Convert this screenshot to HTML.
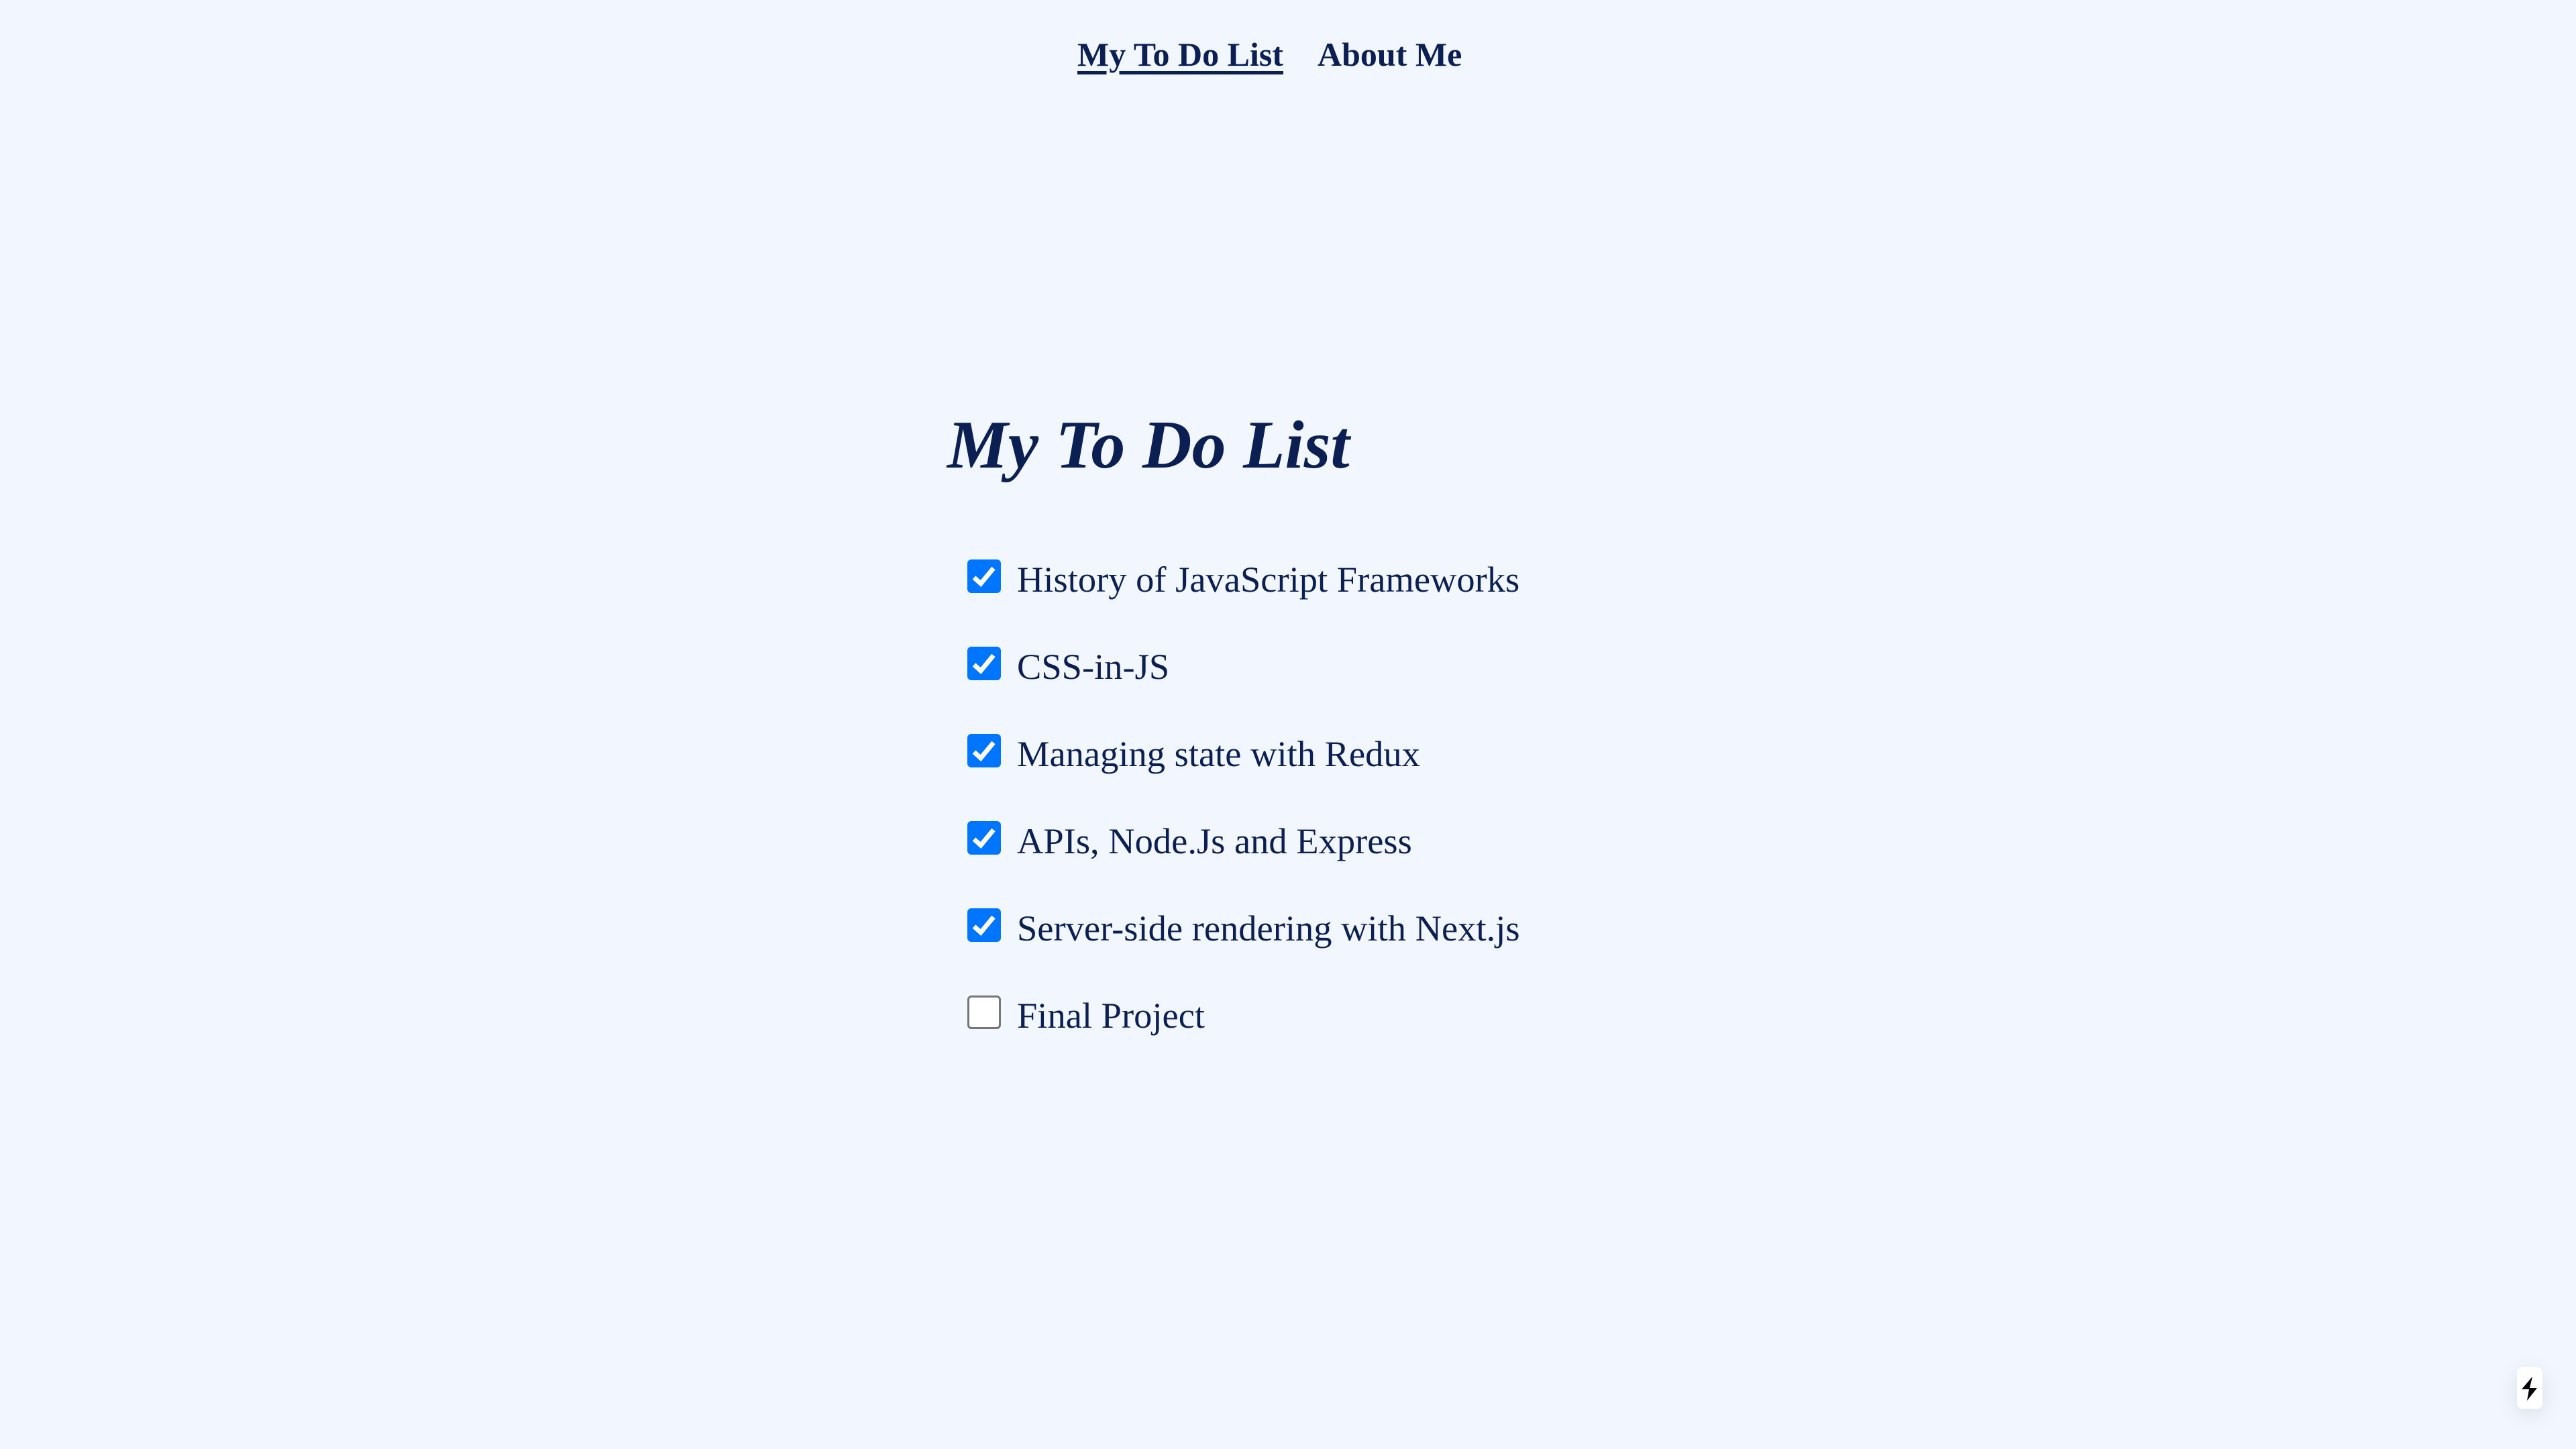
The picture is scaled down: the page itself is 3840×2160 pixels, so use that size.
<!DOCTYPE html>
<html><head><meta charset="utf-8"><style>
html,body{margin:0;padding:0}
body{width:3840px;height:2160px;background:#f2f6ff;color:#0b1f52;font-family:"Liberation Serif",serif;position:relative;overflow:hidden}
.nav{position:absolute;top:46px;font-weight:bold;font-size:50px;line-height:70px;white-space:nowrap}
.n1{left:1606px;text-decoration:underline;text-decoration-thickness:5px;text-underline-offset:8px}
.n2{left:1964px}
h1{position:absolute;left:1412px;top:594px;margin:0;font-size:102px;font-style:italic;font-weight:bold;line-height:140px;white-space:nowrap}
.row{position:absolute;left:1442px;height:50px}
.cb{position:absolute;left:0;top:0;width:50px;height:50px;border-radius:6px;background:#0075ff;box-sizing:border-box}
.cb.off{background:#fff;border:3px solid #767676}
.cb svg{position:absolute;left:6px;top:8px}
.t{position:absolute;left:74px;top:-5px;font-size:54.5px;line-height:70px;white-space:nowrap}
.badge{position:absolute;left:3752px;top:2038px;width:38px;height:62px;background:#fff;border-radius:8px;box-shadow:0 8px 30px rgba(0,0,0,.1)}
</style></head><body>
<div class="nav n1">My To Do List</div>
<div class="nav n2">About Me</div>
<h1>My To Do List</h1>
<div class="row" style="top:834px"><div class="cb"><svg width="38" height="34" viewBox="0 0 38 34"><path d="M4 19 L14 28 L33 5" stroke="#fff" stroke-width="7" fill="none"/></svg></div><div class="t">History of JavaScript Frameworks</div></div>
<div class="row" style="top:964px"><div class="cb"><svg width="38" height="34" viewBox="0 0 38 34"><path d="M4 19 L14 28 L33 5" stroke="#fff" stroke-width="7" fill="none"/></svg></div><div class="t">CSS-in-JS</div></div>
<div class="row" style="top:1094px"><div class="cb"><svg width="38" height="34" viewBox="0 0 38 34"><path d="M4 19 L14 28 L33 5" stroke="#fff" stroke-width="7" fill="none"/></svg></div><div class="t">Managing state with Redux</div></div>
<div class="row" style="top:1224px"><div class="cb"><svg width="38" height="34" viewBox="0 0 38 34"><path d="M4 19 L14 28 L33 5" stroke="#fff" stroke-width="7" fill="none"/></svg></div><div class="t">APIs, Node.Js and Express</div></div>
<div class="row" style="top:1354px"><div class="cb"><svg width="38" height="34" viewBox="0 0 38 34"><path d="M4 19 L14 28 L33 5" stroke="#fff" stroke-width="7" fill="none"/></svg></div><div class="t">Server-side rendering with Next.js</div></div>
<div class="row" style="top:1484px"><div class="cb off"></div><div class="t">Final Project</div></div>
<div class="badge"><svg width="38" height="62" viewBox="0 0 38 62"><path d="M23 14 L7 33 L18 33 L15 50 L30 31 L19 31 Z" fill="#000"/></svg></div>
</body></html>
